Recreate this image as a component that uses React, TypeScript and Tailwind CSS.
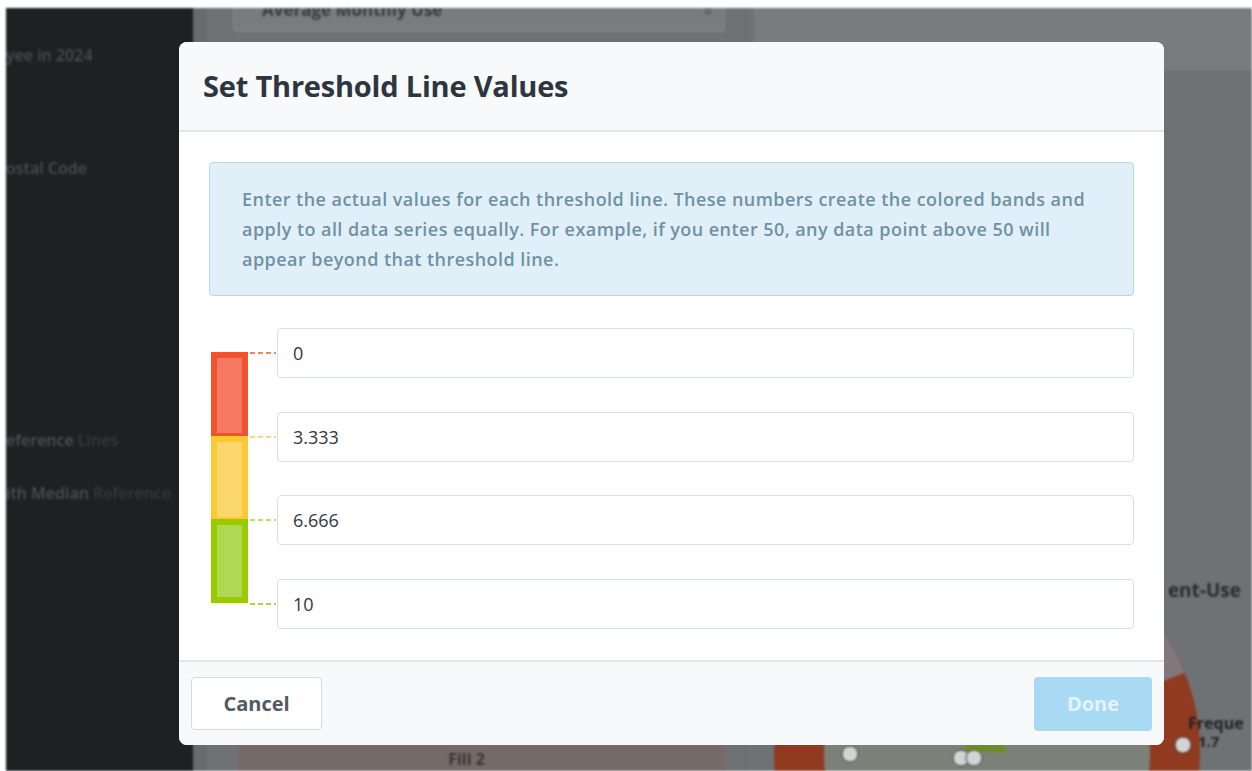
import { useState } from "react";

const thresholds = [
    { value: "0", dash: "#e0603f" },
    { value: "3.333", dash: "#f3c94a" },
    { value: "6.666", dash: "#b7cf3a" },
    { value: "10", dash: "#97c510" },
];

function Connector({ color }: { color: string }) {
    return (
        <svg width="26" height="2" className="shrink-0">
            <line x1="0" y1="1" x2="26" y2="1" stroke={color} strokeWidth="1.3" strokeDasharray="5 3" />
        </svg>
    );
}

function ThresholdBar() {
    return (
        <div className="ml-[2px] mt-[24px] flex w-[37px] flex-col">
            <div className="h-[84px] border-[6px] border-b-[3px] border-[#f05330] bg-[#f57a61]" />
            <div className="h-[83px] border-[6px] border-b-[2px] border-[#fcc835] bg-[#fcd76c]" />
            <div className="h-[84px] border-[6px] border-[#98cb00] bg-[#afd952]" />
        </div>
    );
}

function RadarBands() {
    return (
        <svg className="absolute left-0 top-0" width="520" height="771">
            <defs>
                <clipPath id="outer">
                    <circle cx="241" cy="744" r="213" />
                </clipPath>
            </defs>
            <circle cx="241" cy="744" r="188" fill="none" stroke="#903a20" strokeWidth="50" />
            {/* upper right band is a paler sector */}
            <path d="M 241 744 L 241 480 L 520 480 L 520 632 Z" fill="#837879" clipPath="url(#outer)" />
            <circle cx="241" cy="744" r="163" fill="#7c8079" />
            <path d="M 214 744 L 241 716 L 262 744 Z" fill="#6f8a2a" />
            <circle cx="104" cy="746" r="8" fill="#d3d3d3" stroke="#444" strokeWidth="1" />
            <circle cx="215" cy="750" r="8" fill="#d3d3d3" stroke="#444" strokeWidth="1" />
            <circle cx="228" cy="750" r="8" fill="#d3d3d3" stroke="#444" strokeWidth="1" />
            <circle cx="437" cy="737" r="8" fill="#d3d3d3" stroke="#444" strokeWidth="1" />
            <text x="442" y="721" fontSize="16" fontWeight="700" fill="#1f1f1f" fontFamily="Open Sans, sans-serif">Freque</text>
            <text x="452" y="739" fontSize="15" fontWeight="700" fill="#1f1f1f" fontFamily="Open Sans, sans-serif">1.7</text>
        </svg>
    );
}

function Backdrop() {
    return (
        <div className="flex h-full pl-[6px] pt-[8px] blur-[1.2px]">
            {/* sidebar */}
            <aside className="flex w-[187px] flex-col bg-[#1e2022] text-[16px] font-semibold leading-[20px]">
                <div className="mt-[37px] whitespace-nowrap text-[#4a4d50]">yee in 2024</div>
                <div className="mt-[93px] whitespace-nowrap text-[#4a4d50]">ostal Code</div>
                <div className="mt-[252px] whitespace-nowrap text-[#4d5053]">
                    eference <span className="text-[#37393c]">Lines</span>
                </div>
                <div className="mt-[33px] whitespace-nowrap text-[#4d5053]">
                    ith Median <span className="text-[#37393c]">Reference</span>
                </div>
            </aside>

            {/* dashboard area */}
            <div className="flex flex-1 overflow-hidden bg-[#6f7274]">
                <div className="w-[14px] bg-[#686b6d]" />
                <div className="flex w-[538px] flex-col pl-[26px] pr-[20px]">
                    <div className="-mt-[20px] flex h-[44px] items-center justify-between rounded-[4px] border border-[#818384] bg-[#7a7b7c] pl-[28px] pr-[12px]">
                        <span className="text-[17px] font-bold text-[#3a3b3c]">Average Monthly Use</span>
                        <span className="text-[14px] font-bold text-[#505253]">≡</span>
                    </div>
                    <div className="flex-1" />
                    <div className="ml-[5px] flex h-[26px] justify-center bg-[#766a68] pr-[30px] pt-[2px]">
                        <span className="text-[16px] font-bold text-[#3b3232]">Fill 2</span>
                    </div>
                </div>
                <div className="w-[1px] bg-[#666869]" />
                <div className="relative flex flex-1 flex-col">
                    <div className="ml-[8px] h-[62px] rounded-bl-[6px] bg-[#797c7d]" />
                    <RadarBands />
                    <div className="relative flex flex-1 justify-end pr-[11px] pt-[506px]">
                        <span className="text-[19px] font-bold text-[#2a2b2c]">ent-Use</span>
                    </div>
                </div>
            </div>
        </div>
    );
}

export default function App() {
    const [values, setValues] = useState(thresholds.map((t) => t.value));

    return (
        <div className="relative h-[771px] w-[1252px] overflow-hidden bg-white font-['Open_Sans','Noto_Sans',sans-serif]">
            <Backdrop />

            <div className="absolute left-[179px] top-[42px] flex h-[703px] w-[985px] flex-col overflow-hidden rounded-[8px] bg-white">
                <header className="flex h-[90px] shrink-0 items-center border-b-[2px] border-[#e1e6ea] bg-[#f7f9fa] px-[24px]">
                    <h2 className="text-[29px] font-bold tracking-[-0.2px] text-[#2c3540]">Set Threshold Line Values</h2>
                </header>

                <div className="flex flex-1 flex-col px-[30px] pt-[30px]">
                    <div className="rounded-[4px] border border-[#bcd6e2] bg-[#e1f0f8] py-[21px] pl-[32px] pr-[20px] text-[18px] font-semibold leading-[30px] tracking-[0.45px] text-[#6f91a5]">
                        Enter the actual values for each threshold line. These numbers create the colored bands and apply
                        to all data series equally. For example, if you enter 50, any data point above 50 will appear
                        beyond that threshold line.
                    </div>

                    <div className="mt-[32px] flex">
                        <div className="w-[41px] shrink-0">
                            <ThresholdBar />
                        </div>
                        <div className="flex flex-1 flex-col gap-[33.5px]">
                            {thresholds.map((t, i) => (
                                <div key={i} className="flex items-center gap-[1px]">
                                    <Connector color={t.dash} />
                                    <input
                                        value={values[i]}
                                        onChange={(e) =>
                                            setValues((v) => v.map((x, j) => (j === i ? e.target.value : x)))
                                        }
                                        className="h-[50px] flex-1 rounded-[4px] border border-[#d8dfe5] bg-white px-[15px] text-[18px] text-[#2f3740] outline-none"
                                    />
                                </div>
                            ))}
                        </div>
                    </div>
                </div>

                <footer className="flex h-[85px] shrink-0 items-center justify-between border-t-[2px] border-[#e1e6ea] bg-[#f7f9fa] px-[12px]">
                    <button className="h-[53px] w-[131px] rounded-[4px] border border-[#d3dae0] bg-white text-[20px] font-bold text-[#4f5a65]">
                        Cancel
                    </button>
                    <button className="h-[54px] w-[118px] rounded-[4px] bg-[#a8daf3] text-[20px] font-bold text-[#e3f4fc]">
                        Done
                    </button>
                </footer>
            </div>
        </div>
    );
}
